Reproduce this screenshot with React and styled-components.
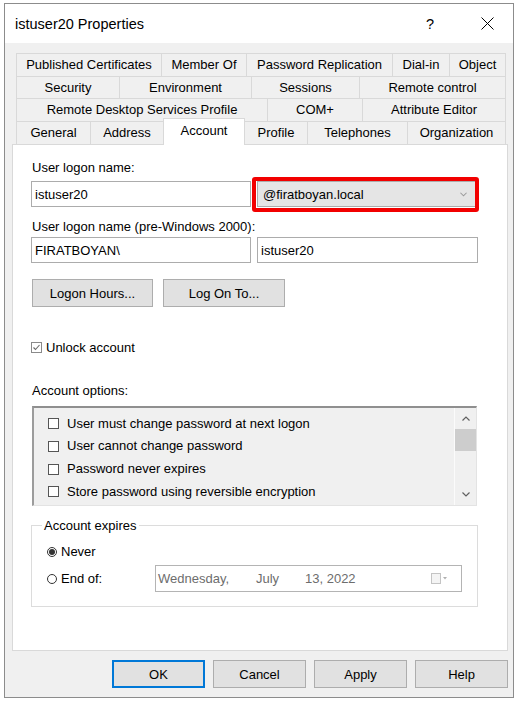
import React from 'react';
import styled, { createGlobalStyle, css } from 'styled-components';

const Global = createGlobalStyle`
  html, body { margin: 0; padding: 0; background: #fff; }
  body { font-family: "Liberation Sans", Arial, sans-serif; font-size: 13px; color: #000; }
  * { box-sizing: border-box; }
`;

const Window = styled.div`
  margin: 3px 0 0 4px;
  width: 510px;
  height: 695px;
  border: 1px solid #8c8c8c;
  display: flex;
  flex-direction: column;
  background: #f0f0f0;
`;

const TitleBar = styled.div`
  height: 39px;
  flex: none;
  background: #fff;
  display: flex;
  align-items: center;
  padding: 0 13px 0 10px;
`;

const Title = styled.div`
  flex: 1;
  font-size: 14.5px;
  line-height: 18px;
`;

const CaptionGlyph = styled.div`
  width: ${p => p.$w}px;
  margin-left: ${p => p.$ml || 0}px;
  display: flex;
  align-items: center;
  justify-content: center;
  font-size: 14.5px;
  line-height: 18px;
`;

const Body = styled.div`
  flex: 1;
  padding: 10px 5px 0 7px;
  display: flex;
  flex-direction: column;
`;

const TabRows = styled.div`
  margin-left: 4px;
  width: 490px;
  display: flex;
  flex-direction: column;
`;

const TabRow = styled.div`
  display: flex;
  height: ${p => p.$h}px;
`;

const Tab = styled.div`
  flex: none;
  width: ${p => p.$w}px;
  display: flex;
  align-items: center;
  justify-content: center;
  border: 1px solid #d9d9d9;
  border-bottom: none;
  background: #f0f0f0;
  white-space: nowrap;
  line-height: 16px;
  & + & { margin-left: -1px; }
  ${p => p.$active && css`
    background: #fff;
    margin-top: -3px;
    margin-bottom: -1px;
    padding-bottom: 3px;
    position: relative;
    z-index: 1;
  `}
`;

const Panel = styled.div`
  height: 507px;
  flex: none;
  background: #fff;
  border: 1px solid #d9d9d9;
  padding: 15px 0 0 18px;
  display: flex;
  flex-direction: column;
`;

const Label = styled.div`
  line-height: 16px;
  height: 16px;
  margin-top: ${p => p.$mt}px;
  margin-left: 1px;
`;

const FieldGrid = styled.div`
  display: grid;
  grid-template-columns: 220px 221px;
  column-gap: 6px;
  margin-top: ${p => p.$mt}px;
`;

const TextField = styled.input`
  height: 26px;
  width: 100%;
  margin: 0;
  border: 1px solid #acacac;
  background: #fff;
  padding: 0 3px;
  font: inherit;
  font-size: 13px;
  color: #000;
  outline: none;
`;

const ComboWrap = styled.div`
  position: relative;
  height: 26px;
`;

const Combo = styled.div`
  height: 26px;
  border: 1px solid #acacac;
  background: #e5e5e5;
  display: flex;
  align-items: center;
  padding: 0 10px 0 5px;
  justify-content: space-between;
`;

const Highlight = styled.span`
  position: absolute;
  top: -4px;
  left: -5px;
  right: -1px;
  bottom: -5px;
  border: 4px solid #f20000;
  border-radius: 3px;
  pointer-events: none;
`;

const ButtonRow = styled.div`
  display: flex;
  gap: 10px;
  margin: 16px 0 0 1px;
`;

const Button = styled.button`
  width: ${p => p.$w}px;
  height: 28px;
  margin: 0;
  padding: 0;
  background: #e1e1e1;
  border: 1px solid ${p => (p.$default ? '#0078d7' : '#adadad')};
  box-shadow: ${p => (p.$default ? 'inset 0 0 0 1px #0078d7' : 'none')};
  font: inherit;
  font-size: 13px;
  color: #000;
`;

const CheckRow = styled.div`
  display: flex;
  align-items: center;
  height: 16px;
  margin-top: ${p => p.$mt || 0}px;
  gap: ${p => p.$gap}px;
`;

const Box = styled.span`
  width: 11px;
  height: 11px;
  flex: none;
  border: 1px solid ${p => p.$c || '#333'};
  background: #fff;
  display: flex;
  align-items: center;
  justify-content: center;
`;

const ListBox = styled.div`
  margin: 7px 0 0 1px;
  width: 445px;
  height: 100px;
  border-top: 2px solid #8f8f8f;
  border-left: 2px solid #9c9c9c;
  border-right: 1px solid #e3e3e3;
  border-bottom: 1px solid #e3e3e3;
  background: #f0f0f0;
  display: flex;
`;

const Items = styled.div`
  flex: 1;
  padding: 5px 0 0 14px;
`;

const Item = styled.div`
  height: 22.67px;
  display: flex;
  align-items: center;
  gap: 8px;
  line-height: 16px;
  padding-bottom: 1px;
`;

const ScrollBar = styled.div`
  width: 22px;
  flex: none;
  border-left: 1px solid #fbfbfb;
  display: flex;
  flex-direction: column;
`;

const ScrollArrow = styled.div`
  height: 21px;
  display: flex;
  align-items: center;
  justify-content: center;
`;

const Thumb = styled.div`
  height: 22px;
  background: #cdcdcd;
`;

const Spacer = styled.div`
  flex: 1;
`;

const Group = styled.div`
  position: relative;
  margin-top: 19px;
  width: 447px;
  height: 82px;
  border: 1px solid #dcdcdc;
  padding: 18px 0 0 15px;
`;

const Legend = styled.span`
  position: absolute;
  top: -8px;
  left: 10px;
  padding: 0 2px;
  background: #fff;
  line-height: 16px;
`;

const RadioRow = styled.div`
  display: flex;
  align-items: center;
  height: ${p => p.$h}px;
  margin-top: ${p => p.$mt || 0}px;
`;

const RadioLabel = styled.div`
  display: flex;
  align-items: center;
  gap: 4px;
  width: ${p => (p.$w ? `${p.$w}px` : 'auto')};
  line-height: 16px;
`;

const Radio = styled.span`
  width: 10px;
  height: 10px;
  border-radius: 50%;
  border: 1px solid #333;
  background: #fff;
  display: flex;
  align-items: center;
  justify-content: center;
  flex: none;
  &::after {
    content: '';
    display: ${p => (p.$on ? 'block' : 'none')};
    width: 6px;
    height: 6px;
    border-radius: 50%;
    background: #333;
  }
`;

const DatePicker = styled.div`
  width: 307px;
  height: 27px;
  border: 1px solid #b4b4b4;
  display: flex;
  align-items: center;
  padding: 0 13px 0 2px;
  color: #6d6d6d;
  line-height: 16px;
`;

const DatePart = styled.span`
  width: ${p => (p.$w ? `${p.$w}px` : 'auto')};
  flex: none;
`;

const CalIcon = styled.div`
  margin-left: auto;
  display: flex;
  align-items: center;
`;

const Footer = styled.div`
  display: flex;
  justify-content: flex-end;
  gap: 8px;
  margin-top: 9px;
`;

const Chevron = ({ up, color = '#555', w = 8 }) => (
  <svg width={w} height="5" viewBox="0 0 8 5">
    <path d={up ? 'M0.5 4.5 L4 1 L7.5 4.5' : 'M0.5 0.5 L4 4 L7.5 0.5'} fill="none" stroke={color} strokeWidth="1.2" />
  </svg>
);

const tabRows = [
  { h: 23, tabs: [['Published Certificates', 146], ['Member Of', 86], ['Password Replication', 147], ['Dial-in', 58], ['Object', 57]] },
  { h: 22, tabs: [['Security', 104], ['Environment', 133], ['Sessions', 109], ['Remote control', 147]] },
  { h: 23, tabs: [['Remote Desktop Services Profile', 252], ['COM+', 96], ['Attribute Editor', 144]] },
  { h: 23, tabs: [['General', 75], ['Address', 74], ['Account', 82, true], ['Profile', 64], ['Telephones', 101], ['Organization', 99]] },
];

const options = [
  'User must change password at next logon',
  'User cannot change password',
  'Password never expires',
  'Store password using reversible encryption',
];

export default function App() {
  return (
    <>
      <Global />
      <Window>
        <TitleBar>
          <Title>istuser20 Properties</Title>
          <CaptionGlyph $w={20}>?</CaptionGlyph>
          <CaptionGlyph $w={26} $ml={34}>
            <svg width="13" height="13" viewBox="0 0 13 13">
              <path d="M0.5 0.5 L12.5 12.5 M12.5 0.5 L0.5 12.5" stroke="#000" strokeWidth="1" fill="none" />
            </svg>
          </CaptionGlyph>
        </TitleBar>
        <Body>
          <TabRows>
            {tabRows.map((row, i) => (
              <TabRow key={i} $h={row.h}>
                {row.tabs.map(([name, w, active]) => (
                  <Tab key={name} $w={w} $active={active}>{name}</Tab>
                ))}
              </TabRow>
            ))}
          </TabRows>
          <Panel>
            <Label $mt={0}>User logon name:</Label>
            <FieldGrid $mt={5}>
              <TextField readOnly defaultValue="istuser20" />
              <ComboWrap>
                <Combo>
                  <span>@firatboyan.local</span>
                  <Chevron color="#9a9a9a" w={7} />
                </Combo>
                <Highlight />
              </ComboWrap>
            </FieldGrid>
            <Label $mt={12}>User logon name (pre-Windows 2000):</Label>
            <FieldGrid $mt={2}>
              <TextField readOnly defaultValue="FIRATBOYAN\" />
              <TextField readOnly defaultValue="istuser20" />
            </FieldGrid>
            <ButtonRow>
              <Button $w={121}>Logon Hours...</Button>
              <Button $w={122}>Log On To...</Button>
            </ButtonRow>
            <CheckRow $mt={32} $gap={4}>
              <Box $c="#8a8a8a">
                <svg width="9" height="9" viewBox="0 0 9 9">
                  <path d="M1.5 4.5 L3.5 6.5 L7.5 2" fill="none" stroke="#6a6a6a" strokeWidth="1.1" />
                </svg>
              </Box>
              <span>Unlock account</span>
            </CheckRow>
            <Label $mt={28}>Account options:</Label>
            <ListBox>
              <Items>
                {options.map(o => (
                  <Item key={o}>
                    <Box $c="#555" />
                    <span>{o}</span>
                  </Item>
                ))}
              </Items>
              <ScrollBar>
                <ScrollArrow><Chevron up color="#606060" /></ScrollArrow>
                <Thumb />
                <Spacer />
                <ScrollArrow><Chevron color="#606060" /></ScrollArrow>
              </ScrollBar>
            </ListBox>
            <Group>
              <Legend>Account expires</Legend>
              <RadioRow $h={16}>
                <RadioLabel>
                  <Radio $on />
                  <span>Never</span>
                </RadioLabel>
              </RadioRow>
              <RadioRow $h={27} $mt={5}>
                <RadioLabel $w={108}>
                  <Radio />
                  <span>End of:</span>
                </RadioLabel>
                <DatePicker>
                  <DatePart $w={98}>Wednesday,</DatePart>
                  <DatePart $w={49}>July</DatePart>
                  <DatePart>13, 2022</DatePart>
                  <CalIcon>
                    <svg width="17" height="11" viewBox="0 0 17 11">
                      <rect x="0.5" y="0.5" width="9" height="10" fill="#f4f4f4" stroke="#c4c4c4" />
                      <path d="M12 4 L16 4 L14 6.5 Z" fill="#b0b0b0" />
                    </svg>
                  </CalIcon>
                </DatePicker>
              </RadioRow>
            </Group>
          </Panel>
          <Footer>
            <Button $w={93} $default>OK</Button>
            <Button $w={93}>Cancel</Button>
            <Button $w={93}>Apply</Button>
            <Button $w={93}>Help</Button>
          </Footer>
        </Body>
      </Window>
    </>
  );
}
